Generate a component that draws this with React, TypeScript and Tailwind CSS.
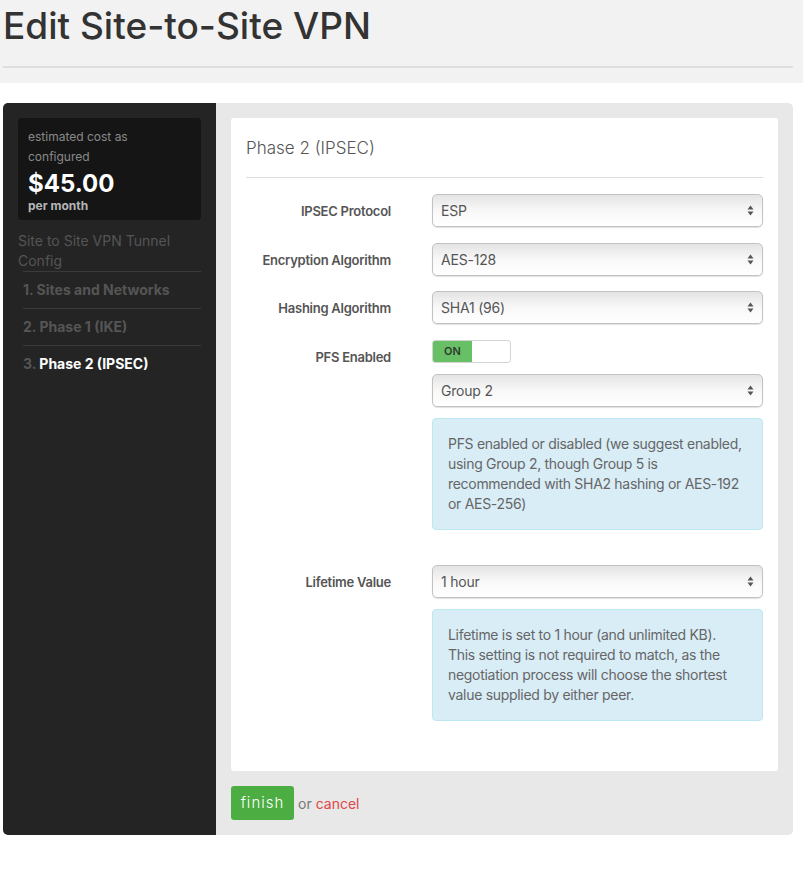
import React, { useState } from 'react';

const font = { fontFamily: 'Inter, "Noto Sans", "Liberation Sans", sans-serif' };

const SelectArrows = () => (
  <svg width="7" height="11" viewBox="0 0 7 11" className="shrink-0">
    <path d="M3.5 0.5 L6.5 4.5 L0.5 4.5 Z" fill="#555" />
    <path d="M3.5 10.5 L6.5 6.5 L0.5 6.5 Z" fill="#555" />
  </svg>
);

const FakeSelect = ({ value }: { value: string }) => (
  <div className="flex h-[33px] items-center justify-between rounded-[5px] border border-[#c2c2c2] bg-linear-to-b from-[#e4e4e4] via-[#f8f8f8] to-white pl-[8px] pr-[8px] text-[14px] tracking-[-0.2px] text-[#555] shadow-[0_1px_1px_rgba(0,0,0,0.12)]">
    <span>{value}</span>
    <SelectArrows />
  </div>
);

const InfoBox = ({ children }: { children: React.ReactNode }) => (
  <div className="rounded-[4px] border border-[#bce8f1] bg-[#d9edf7] pl-[15px] pr-[16px] py-[15px] text-[14px] leading-[20px] tracking-[-0.3px] text-[#666]">
    {children}
  </div>
);

const Row = ({ label, children, className = '' }: { label: string; children: React.ReactNode; className?: string }) => (
  <div className={`flex items-start ${className}`}>
    <div className="w-[145px] shrink-0 pt-[8px] text-right text-[13px] font-semibold leading-[18px] tracking-[-0.25px] text-[#555]">{label}</div>
    <div className="ml-[41px] flex-1">{children}</div>
  </div>
);

const steps = [
  { num: '1.', name: 'Sites and Networks', active: false },
  { num: '2.', name: 'Phase 1 (IKE)', active: false },
  { num: '3.', name: 'Phase 2 (IPSEC)', active: true },
];

export default function App() {
  const [pfs, setPfs] = useState(true);

  return (
    <div className="min-h-[888px] bg-white" style={font}>
      <div className="h-[83px] bg-[#f2f2f2] px-[3px]">
        <h1 className="pt-[5px] text-[37px] leading-[42px] font-medium text-[#333]">Edit Site-to-Site VPN</h1>
        <div className="mt-[19px] h-[2px] w-[790px] bg-[#dedede]" />
      </div>

      <div className="mx-[3px] mt-[20px] flex w-[790px] overflow-hidden rounded-[5px]">
        {/* sidebar */}
        <div className="w-[213px] shrink-0 bg-[#242424] px-[15px] pt-[15px]">
          <div className="rounded-[4px] bg-[#151515] px-[10px] pt-[9px] pb-[7px]">
            <div className="text-[12px] leading-[20px] text-[#8a8a8a]">estimated cost as</div>
            <div className="text-[12px] leading-[20px] text-[#8a8a8a]">configured</div>
            <div className="pt-[2px] text-[24px] leading-[30px] font-bold text-white">$45.00</div>
            <div className="text-[12px] leading-[14px] font-bold text-[#b5b5b5]">per month</div>
          </div>
          <div className="mt-[11px] text-[14px] leading-[20px] text-[#555]">Site to Site VPN Tunnel Config</div>
          <ul className="ml-[5px]">
            {steps.map((s) => (
              <li key={s.num} className="border-t border-[#3a3a3a] py-[8px] text-[14px] leading-[20px] font-bold">
                <span className="text-[#555]">{s.num} </span>
                <span className={s.active ? 'text-white' : 'text-[#555]'}>{s.name}</span>
              </li>
            ))}
          </ul>
        </div>

        {/* main */}
        <div className="flex-1 bg-[#e8e8e8] p-[15px]">
          <div className="rounded-[3px] bg-white px-[15px] pt-[20px] pb-[50px]">
            <h2 className="text-[17px] leading-[20px] font-light text-[#555]">Phase 2 (IPSEC)</h2>
            <div className="mt-[19px] mb-[16px] h-px bg-[#dddddd]" />

            <Row label="IPSEC Protocol" className="mb-[16px]">
              <FakeSelect value="ESP" />
            </Row>
            <Row label="Encryption Algorithm" className="mb-[15px]">
              <FakeSelect value="AES-128" />
            </Row>
            <Row label="Hashing Algorithm" className="mb-[16px]">
              <FakeSelect value="SHA1 (96)" />
            </Row>
            <Row label="PFS Enabled" className="mb-[35px]">
              <button
                type="button"
                onClick={() => setPfs(!pfs)}
                className="flex h-[23px] w-[79px] overflow-hidden rounded-[3px] border border-[#d4d4d4] bg-white"
              >
                <span className="flex h-full w-[39px] items-center justify-center bg-[#67c066] text-[11px] font-semibold text-[#2f3b2f]">
                  {pfs ? 'ON' : 'OFF'}
                </span>
              </button>
              <div className="mt-[11px]">
                <FakeSelect value="Group 2" />
              </div>
              <div className="mt-[11px]">
                <InfoBox>
                  PFS enabled or disabled (we suggest enabled, using Group 2, though Group 5 is recommended with SHA2 hashing or
                  AES-192 or AES-256)
                </InfoBox>
              </div>
            </Row>
            <Row label="Lifetime Value">
              <FakeSelect value="1 hour" />
              <div className="mt-[11px]">
                <InfoBox>
                  Lifetime is set to 1 hour (and unlimited KB). This setting is not required to match, as the negotiation process
                  will choose the shortest value supplied by either peer.
                </InfoBox>
              </div>
            </Row>
          </div>

          <div className="mt-[15px] flex items-center">
            <button
              type="button"
              className="h-[34px] w-[63px] rounded-[3px] bg-[#4cad43] text-[15px] font-light tracking-[1px] text-white"
            >
              finish
            </button>
            <span className="ml-[4px] text-[14px] text-[#777]">or</span>
            <a href="#" className="ml-[4px] text-[14px] text-[#e04646]">
              cancel
            </a>
          </div>
        </div>
      </div>
    </div>
  );
}
